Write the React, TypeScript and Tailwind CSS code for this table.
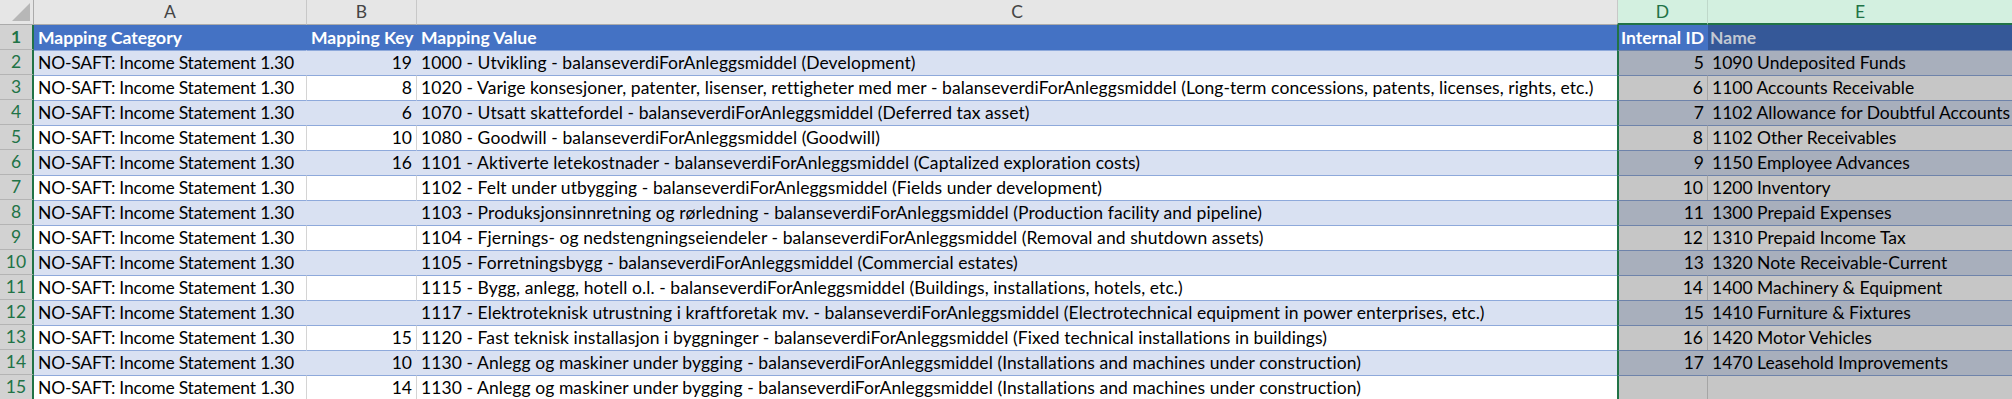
import React from 'react';

type DataRow = { key: string; value: string; id: string; name: string };

const CATEGORY = 'NO-SAFT: Income Statement 1.30';
const TAIL = ' - balanseverdiForAnleggsmiddel ';

const dataRows: DataRow[] = [
  { key: '19', value: `1000 - Utvikling${TAIL}(Development)`, id: '5', name: '1090 Undeposited Funds' },
  { key: '8', value: `1020 - Varige konsesjoner, patenter, lisenser, rettigheter med mer${TAIL}(Long-term concessions, patents, licenses, rights, etc.)`, id: '6', name: '1100 Accounts Receivable' },
  { key: '6', value: `1070 - Utsatt skattefordel${TAIL}(Deferred tax asset)`, id: '7', name: '1102 Allowance for Doubtful Accounts' },
  { key: '10', value: `1080 - Goodwill${TAIL}(Goodwill)`, id: '8', name: '1102 Other Receivables' },
  { key: '16', value: `1101 - Aktiverte letekostnader${TAIL}(Captalized exploration costs)`, id: '9', name: '1150 Employee Advances' },
  { key: '', value: `1102 - Felt under utbygging${TAIL}(Fields under development)`, id: '10', name: '1200 Inventory' },
  { key: '', value: `1103 - Produksjonsinnretning og rørledning${TAIL}(Production facility and pipeline)`, id: '11', name: '1300 Prepaid Expenses' },
  { key: '', value: `1104 - Fjernings- og nedstengningseiendeler${TAIL}(Removal and shutdown assets)`, id: '12', name: '1310 Prepaid Income Tax' },
  { key: '', value: `1105 - Forretningsbygg${TAIL}(Commercial estates)`, id: '13', name: '1320 Note Receivable-Current' },
  { key: '', value: `1115 - Bygg, anlegg, hotell o.l.${TAIL}(Buildings, installations, hotels, etc.)`, id: '14', name: '1400 Machinery & Equipment' },
  { key: '', value: `1117 - Elektroteknisk utrustning i kraftforetak mv.${TAIL}(Electrotechnical equipment in power enterprises, etc.)`, id: '15', name: '1410 Furniture & Fixtures' },
  { key: '15', value: `1120 - Fast teknisk installasjon i byggninger${TAIL}(Fixed technical installations in buildings)`, id: '16', name: '1420 Motor Vehicles' },
  { key: '10', value: `1130 - Anlegg og maskiner under bygging${TAIL}(Installations and machines under construction)`, id: '17', name: '1470 Leasehold Improvements' },
  { key: '14', value: `1130 - Anlegg og maskiner under bygging${TAIL}(Installations and machines under construction)`, id: '', name: '' },
];

const cell = 'h-full flex items-center overflow-hidden whitespace-nowrap shrink-0';

const ColumnHeaders: React.FC = () => (
  <div className="flex h-[25px] bg-[#e6e6e6] text-[#444]">
    <div className="w-[34px] h-full shrink-0 border-r border-b border-[#ababab] relative">
      <div className="absolute right-[3px] bottom-[3px] w-0 h-0 border-l-[18px] border-l-transparent border-b-[18px] border-b-[#b7b7b7]" />
    </div>
    <div className="w-[273px] h-full shrink-0 flex items-center justify-center border-r border-b border-r-[#c8c8c8] border-b-[#ababab]">A</div>
    <div className="w-[110px] h-full shrink-0 flex items-center justify-center border-r border-b border-r-[#c8c8c8] border-b-[#ababab]">B</div>
    <div className="w-[1200px] h-full shrink-0 flex items-center justify-center border-b border-[#ababab]">C</div>
    <div className="w-[91px] h-full shrink-0 flex items-center justify-center bg-[#d3f0e0] text-[#217346] border-l border-r border-l-[#c8c8c8] border-r-[#bfd8ca] border-b-2 border-b-[#217346]">D</div>
    <div className="flex-1 h-full flex items-center justify-center bg-[#d3f0e0] text-[#217346] border-b-2 border-b-[#217346]">E</div>
  </div>
);

const RowHeader: React.FC<{ n: number }> = ({ n }) => (
  <div className="w-[34px] h-full shrink-0 flex items-center justify-center bg-[#d2d2d2] text-[#217346] border-r-2 border-r-[#217346] border-b border-b-[#b4b4b4]">
    {n}
  </div>
);

const HeaderRow: React.FC = () => (
  <div className="flex h-[25px] font-bold">
    <RowHeader n={1} />
    <div className={`${cell} w-[273px] pl-[4px] bg-[#4472c4] text-white`}>Mapping Category</div>
    <div className={`${cell} w-[110px] pl-[4px] bg-[#4472c4] text-white`}>Mapping Key</div>
    <div className={`${cell} w-[1200px] pl-[4px] bg-[#4472c4] text-white`}>Mapping Value</div>
    <div className={`${cell} w-[91px] pl-[2px] bg-[#4472c4] text-white border-l-2 border-l-[#217346]`}>Internal ID</div>
    <div className={`${cell} flex-1 pl-[2px] bg-[#355898] text-[#c3c8d2]`}>Name</div>
  </div>
);

const BodyRow: React.FC<{ n: number; row: DataRow; banded: boolean }> = ({ n, row, banded }) => {
  const base = banded
    ? 'bg-[#d9e1f2] border-t border-t-[#8ea9db] border-r border-r-[#d9e1f2]'
    : 'bg-white border-t border-t-[#8ea9db] border-r border-r-[#d4d4d4]';
  const tint = banded
    ? 'bg-[#a8afbc] border-t border-t-[#6e83aa]'
    : 'bg-[#c6c6c6] border-t border-t-[#6e83aa]';
  return (
    <div className="flex h-[25px]">
      <RowHeader n={n} />
      <div className={`${cell} w-[273px] pl-[4px] tracking-[-0.2px] ${base}`}>{CATEGORY}</div>
      <div className={`${cell} w-[110px] pr-[4px] justify-end ${base}`}>{row.key}</div>
      <div className={`${cell} w-[1200px] pl-[4px] tracking-[0.08px] ${base} border-r-0`}>{row.value}</div>
      <div className={`${cell} w-[91px] pr-[4px] justify-end border-l-2 border-l-[#217346] ${tint} ${banded ? '' : 'border-r border-r-[#a5a5a5]'}`}>
        {row.id}
      </div>
      <div className={`${cell} flex-1 pl-[4px] ${tint}`}>{row.name}</div>
    </div>
  );
};

export default function App() {
  return (
    <div className="w-[2012px] h-[399px] overflow-hidden bg-white text-black text-[17.5px] leading-none font-['Lato','Liberation_Sans',sans-serif]">
      <ColumnHeaders />
      <HeaderRow />
      {dataRows.map((row, i) => (
        <BodyRow key={i} n={i + 2} row={row} banded={i % 2 === 0} />
      ))}
    </div>
  );
}
